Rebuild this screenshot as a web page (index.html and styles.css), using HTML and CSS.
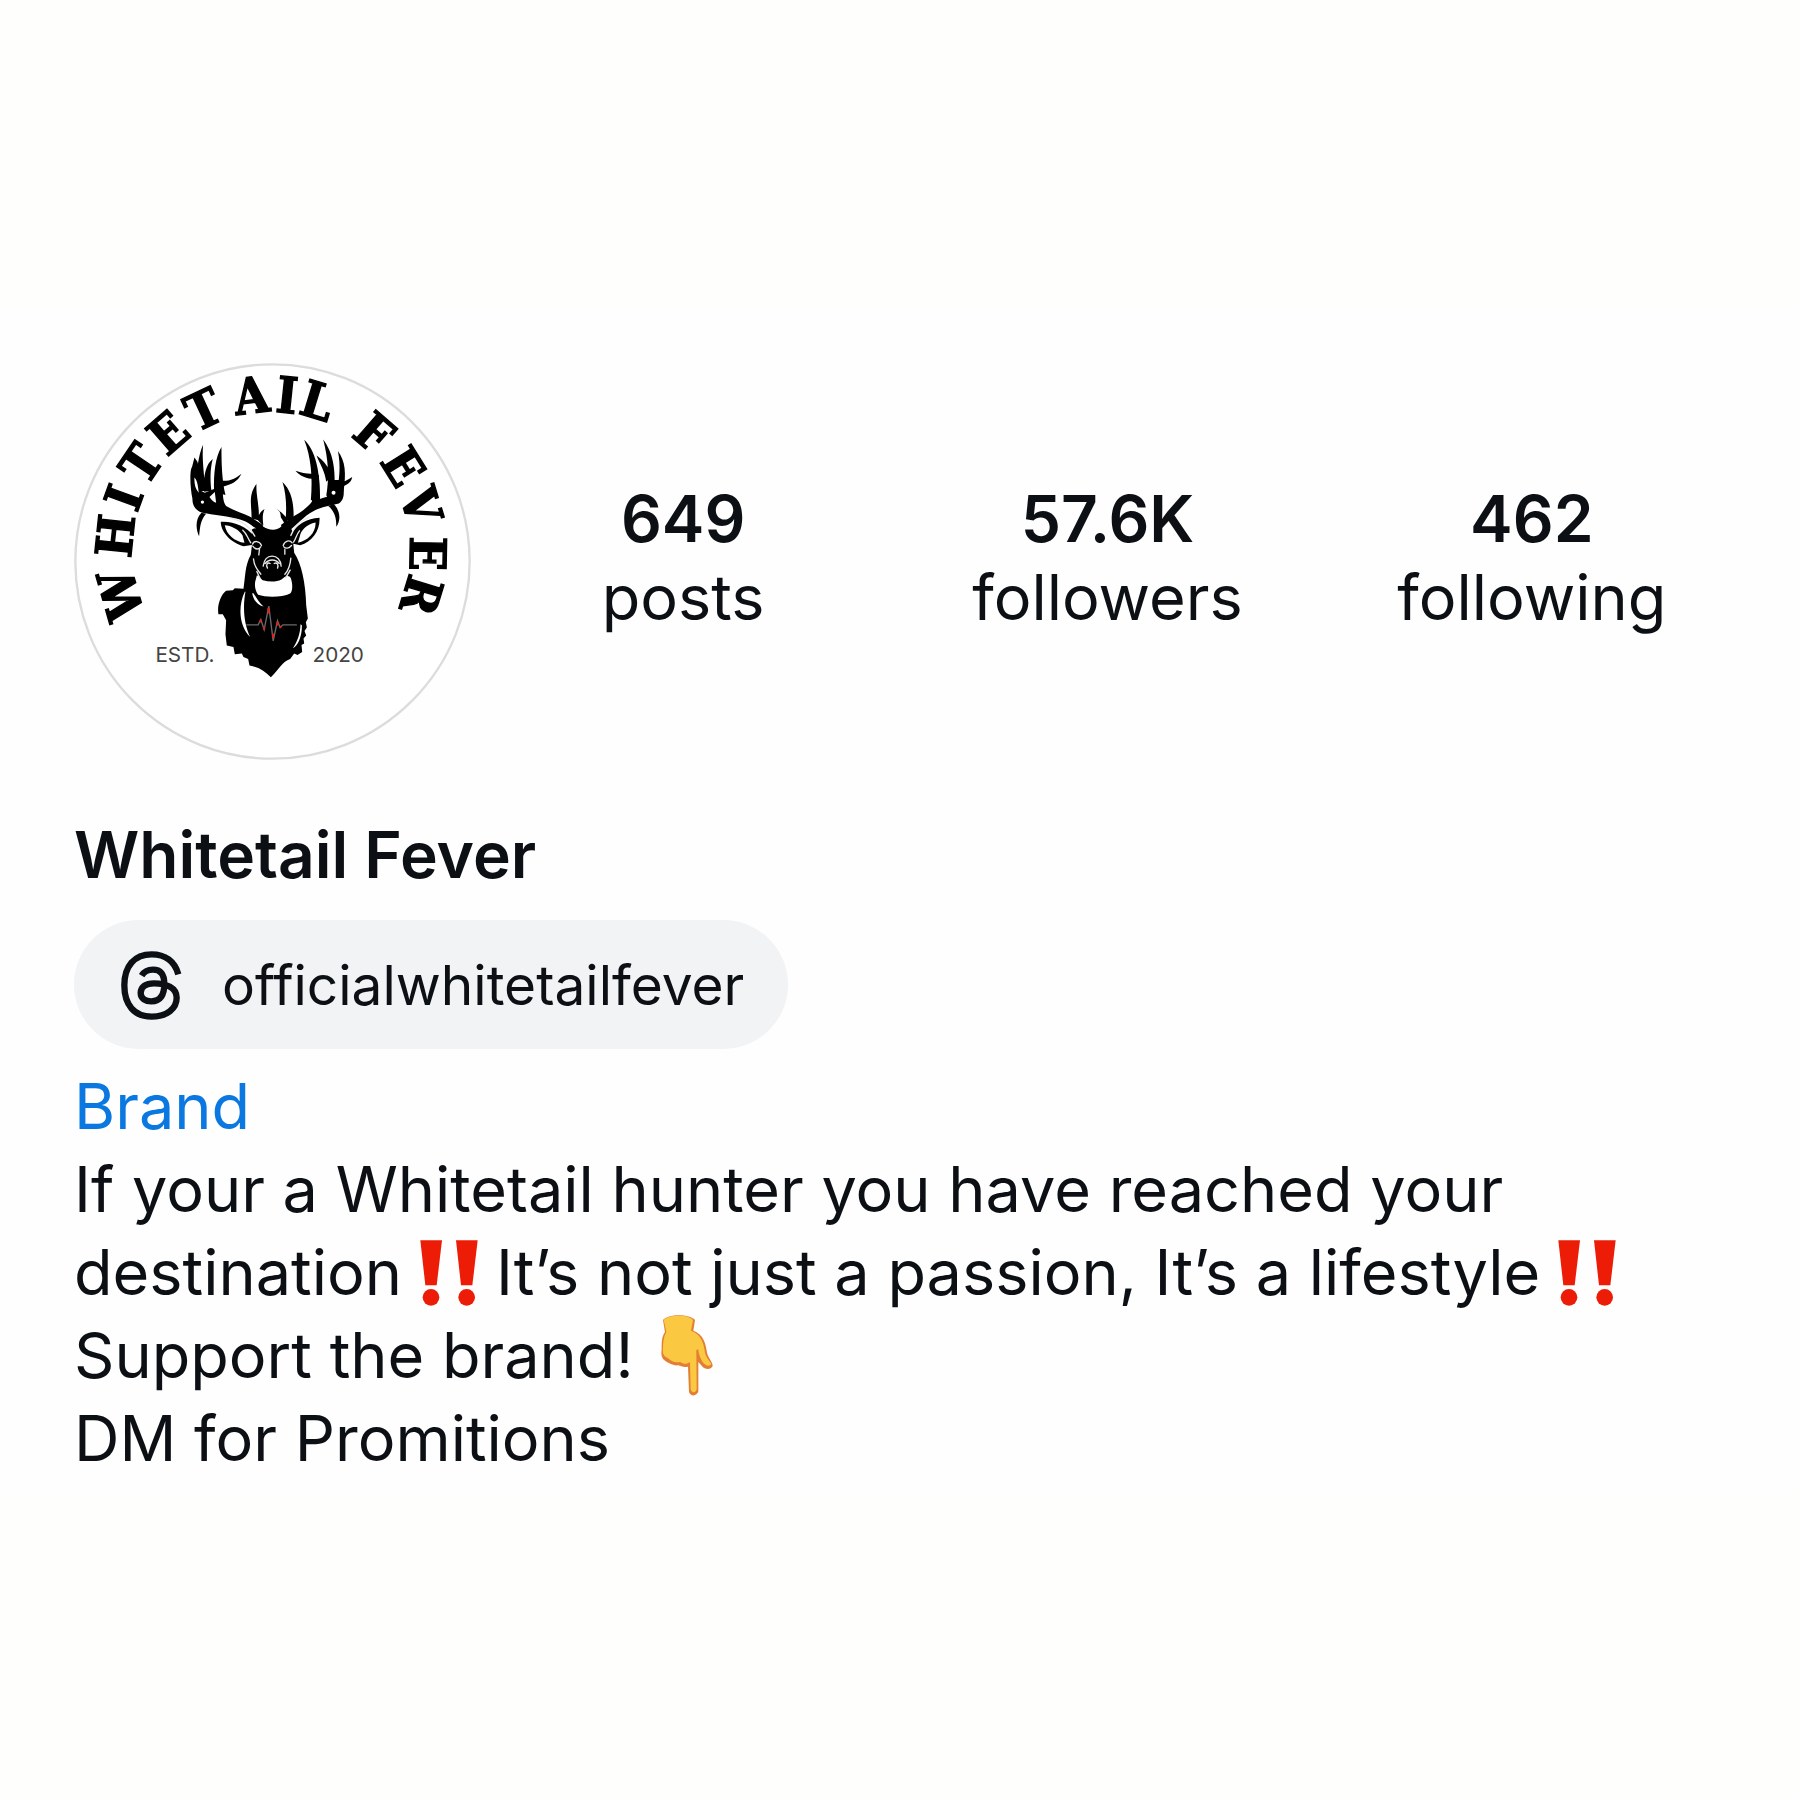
FILE: index.html
```html
<!DOCTYPE html>
<html lang="en" dir="ltr">

<head>
  <meta charset="utf-8">
  <title>Whitetail Fever</title>
  <link rel="stylesheet" href="styles.css">
</head>

<body>

  <main class="profile">
    <header class="profile-top">
      <svg class="avatar" viewBox="42 39 1190 1190" role="img" aria-label="Whitetail Fever logo">
        <circle class="ring" cx="637" cy="634" r="591" />
        <!-- Letters set one by one round the badge -->
        <text class="logo-name"
          x="254 212 231 259 321 407 528 644 711 830 870 956 1016 1050 1048"
          y="792 626 490 412 322 248 196 185 190 230 257 334 431 558 666"
          rotate="-106 -84 -70 -56 -41 -25 -7 6 17 28 41 58 73 91 107">WHITETAIL FEVER</text>
        <text class="logo-year" x="286" y="935">ESTD.</text>
        <text class="logo-year" x="757" y="935">2020</text>

        <!-- Antlers -->
        <g transform="translate(330 210)">
          <path d="M285 332C262 334 246 314 226 304C190 288 150 288 106 279C84 278 66 262 67 236C60 205 58 150 66 140L73 112L82 125C90 150 84 180 92 212L104 218L135 205L158 195C158 225 158 245 168 258C190 272 218 278 240 290L275 312C285 330 318 332 335 312L368 290C390 278 412 262 425 245L428 165L446 165L450 236L470 230L478 170L492 180L515 180C520 205 528 234 506 250C480 256 450 262 436 270C410 282 392 302 362 328Z" />
          <path d="M80 215C76 170 84 105 99 74C95 115 102 160 106 212ZM102 215C99 165 108 132 128 117C120 145 120 180 124 212ZM132 215C130 160 136 110 154 81C154 125 155 180 166 225ZM155 182C178 184 196 176 214 161C202 186 184 192 158 200Z" />
          <path d="M244 296C246 262 232 226 259 192C257 226 268 250 266 300ZM263 300C265 284 271 274 283 267C277 282 276 300 281 318ZM343 312C337 292 320 284 313 264C330 272 343 284 353 300ZM346 300C350 262 348 222 337 186C364 212 372 250 370 300Z" />
          <path d="M422 240C428 170 422 110 402 59C434 90 452 150 448 245ZM434 177C408 176 390 168 376 152C398 160 416 162 436 160ZM468 185C464 152 449 132 439 106C460 122 476 138 484 170ZM468 228C478 170 474 116 459 58C488 98 496 140 493 215ZM498 220C508 180 512 136 503 93C526 124 528 160 520 215ZM506 188C522 187 532 180 546 171C542 190 530 194 512 202Z" />
          <path d="M94 278C76 296 76 326 87 348C90 322 90 302 108 281ZM474 258C494 274 499 296 498 320C513 300 510 270 490 252Z" />
          <path class="white" d="M73 172C82 180 84 200 86 218C76 208 72 192 73 172ZM118 231L134 216L138 248C130 246 124 240 118 231ZM450 186C460 190 468 205 466 228L450 236Z" />
          <circle class="white" cx="97" cy="246" r="5" />
          <circle class="white" cx="490" cy="218" r="6" />
        </g>

        <!-- Head and chest -->
        <g transform="translate(390 480)">
          <path d="M92 35C128 32 168 48 192 78L190 104L160 108C122 98 92 66 92 35ZM388 23C350 24 318 44 300 76L306 100L330 105C366 96 390 60 388 23Z" />
          <path d="M185 58C200 52 218 48 246 58C270 50 285 48 305 58L312 128C334 160 346 220 348 285L353 325L347 336L350 352L343 362L348 376L340 385L342 400L334 404L336 425L322 434L312 430L300 446C276 454 268 476 242 501C224 484 206 470 178 466L174 446L160 440L155 430L134 432L130 410L110 406L106 372L108 330L98 312L85 312C80 286 92 254 108 242L128 240L134 234L160 236C166 200 164 166 182 134L186 100Z" />
          <path class="white" d="M104 45C122 45 146 58 157 75L163 98C134 94 108 72 104 45ZM376 37C350 42 332 60 329 78L323 98C352 92 378 68 376 37Z" />
          <path class="white" d="M200 196C206 194 212 206 218 210C238 216 258 216 274 208C284 198 296 192 302 204C308 222 308 242 300 250C276 262 228 262 204 254C194 240 192 220 197 208Z" />
          <path class="white" d="M218 48C224 40 216 20 222 6C236 -14 252 -14 268 4C276 18 268 40 274 48C262 62 236 62 218 48Z" />
          <path class="white" d="M164 245C142 290 148 350 180 380C164 346 156 300 166 245ZM186 249C190 270 202 286 220 289C206 276 198 262 190 249ZM331 342C330 374 320 396 308 414C324 406 336 376 335 345Z" />
          <g class="fur">
            <path d="M122 25C160 32 180 52 194 78M356 21C330 34 310 52 302 76M158 60C170 70 172 84 182 98M328 62C318 74 318 84 310 96" />
            <path d="M187 102C192 90 208 92 214 106M188 108C196 120 208 118 212 110M208 116L206 134M306 98C298 88 284 92 279 106M304 106C296 116 286 116 281 110M284 118L284 132" />
            <path d="M190 146C192 172 202 178 212 192M302 144C300 166 296 180 284 192M200 184L210 206M300 180L286 204" />
            <path d="M219 168C222 146 234 138 246 138C260 138 272 148 273 168M225 160C236 146 256 146 267 160M232 174C226 162 232 156 240 160M262 174C266 162 260 156 252 160" />
          </g>
          <path class="pulse" d="M168 344H204L212 328L222 358L236 288L249 392L262 332L270 352L278 344H320" />
          <path class="pulse-red" d="M209 336L213 328M221 350L223 358M235 310V293M248 370L250 383M261 346L263 335M269 348L273 352" />
        </g>
      </svg>

      <ul class="stats">
        <li><strong>649</strong><span>posts</span></li>
        <li><strong>57.6K</strong><span>followers</span></li>
        <li><strong>462</strong><span>following</span></li>
      </ul>
    </header>

    <h1 class="name">Whitetail Fever</h1>

    <a class="threads" href="#">
      <svg class="threads-icon" viewBox="36 60 183 207" aria-hidden="true">
        <path d="M208 130C197 90 168 70 128 70C76 70 46 105 46 163C46 222 76 257 128 257C174 257 203 232 203 200C203 170 172 157 135 157C110 157 95 168 95 186C95 203 110 211 127 211C155 211 166 190 166 160C166 130 155 116 132 116C115 116 105 122 98 134" />
      </svg>
      <span>officialwhitetailfever</span>
    </a>

    <section class="bio">
      <a class="category" href="#">Brand</a>
      <p>
        If your a Whitetail hunter you have reached your<br>
        destination<svg class="bangs" viewBox="64 62 174 198" role="img" aria-label="double exclamation mark"><use href="#bang" /><use href="#bang" x="107" /></svg>It’s not just a passion, It’s a lifestyle<svg class="bangs" viewBox="64 62 174 198" role="img" aria-label="double exclamation mark">
          <g id="bang"><path d="M65 63H130L114 198H80Z" /><circle cx="97" cy="234" r="25" /></g>
          <use href="#bang" x="107" />
        </svg><br>
        Support the brand! <svg class="hand" viewBox="70 47 156 243" role="img" aria-label="hand pointing down">
          <path class="hand-shade" d="M76 62C90 44 154 42 172 62L167 94C196 104 204 130 208 160C212 176 226 190 225 200C220 212 204 210 196 204L182 188L182 276C178 292 158 292 154 278L151 202C138 206 130 200 122 198C104 200 92 190 84 186C70 176 70 166 72 150C72 128 72 112 82 98Z" />
          <path class="hand-fill" d="M78 62C92 46 152 44 166 62L160 94C190 104 198 130 202 160C206 176 216 184 221 194C216 202 206 200 198 192C190 182 182 164 182 150L176 152L177 270C174 282 162 282 159 270L157 188C148 196 136 194 128 188C110 192 100 184 90 176C76 170 74 160 76 146C76 128 78 112 86 98Z" />
        </svg><br>
        DM for Promitions
      </p>
    </section>
  </main>

</body>

</html>
```
FILE: styles.css
```css
/* General reset and layout */
* {
  margin: 0;
  padding: 0;
  box-sizing: border-box;
}

body {
  font-family: Inter, "Liberation Sans", sans-serif;
  font-size: 63px;
  line-height: 83px;
  color: #0c1014;
  background: #fefefc;
  display: flex;
  flex-direction: column;
  justify-content: center;
  min-height: 100vh;
}

a {
  color: inherit;
  text-decoration: none;
}

.profile {
  background: #fefefe;
  padding: 56px 56px 14px 74px;
}

/* Logo and counters */
.profile-top {
  display: flex;
  align-items: center;
}

.avatar {
  width: 397px;
  height: 397px;
  flex: none;
}

.ring {
  fill: #fff;
  stroke: #dcdcde;
  stroke-width: 7;
}

.logo-name {
  font-family: "DejaVu Serif Condensed", "DejaVu Serif", serif;
  font-weight: bold;
  font-size: 150px;
  stroke: #000;
  stroke-width: 4;
}

.logo-year {
  font-size: 62px;
  fill: #444;
}

.white {
  fill: #fff;
}

.fur {
  fill: none;
  stroke: #e8e8e8;
  stroke-width: 4;
  stroke-linecap: round;
}

.pulse {
  fill: none;
  stroke: #6a6a6c;
  stroke-width: 4;
}

.pulse-red {
  fill: none;
  stroke: #f01c10;
  stroke-width: 6;
}

.stats {
  flex: 1;
  display: grid;
  grid-template-columns: repeat(3, 1fr);
  list-style: none;
  line-height: 78px;
  text-align: center;
  padding-bottom: 6px;
}

.stats li {
  display: flex;
  flex-direction: column;
}

.stats strong {
  font-size: 64px;
  font-weight: 600;
}

/* Name and Threads handle */
.name {
  font-size: 64px;
  font-weight: 600;
  margin-top: 53px;
}

.threads {
  display: flex;
  align-items: center;
  gap: 40px;
  width: fit-content;
  margin: 24px 0 16px;
  padding: 24px 44px 22px 47px;
  border-radius: 65px;
  background: #f2f3f5;
  font-size: 55px;
}

.threads-icon {
  width: 61px;
  height: 69px;
  fill: none;
  stroke: #0c1014;
  stroke-width: 19;
}

/* Bio text */
.category {
  display: block;
  width: fit-content;
  color: #0a78e0;
}

.bangs {
  width: 58px;
  height: 66px;
  margin: 0 18px;
  vertical-align: -11px;
  fill: #ed1c06;
}

.hand {
  width: 52px;
  height: 81px;
  margin-left: 10px;
  vertical-align: -18px;
}

.hand-shade {
  fill: #e27f35;
}

.hand-fill {
  fill: #fbc842;
}
```
